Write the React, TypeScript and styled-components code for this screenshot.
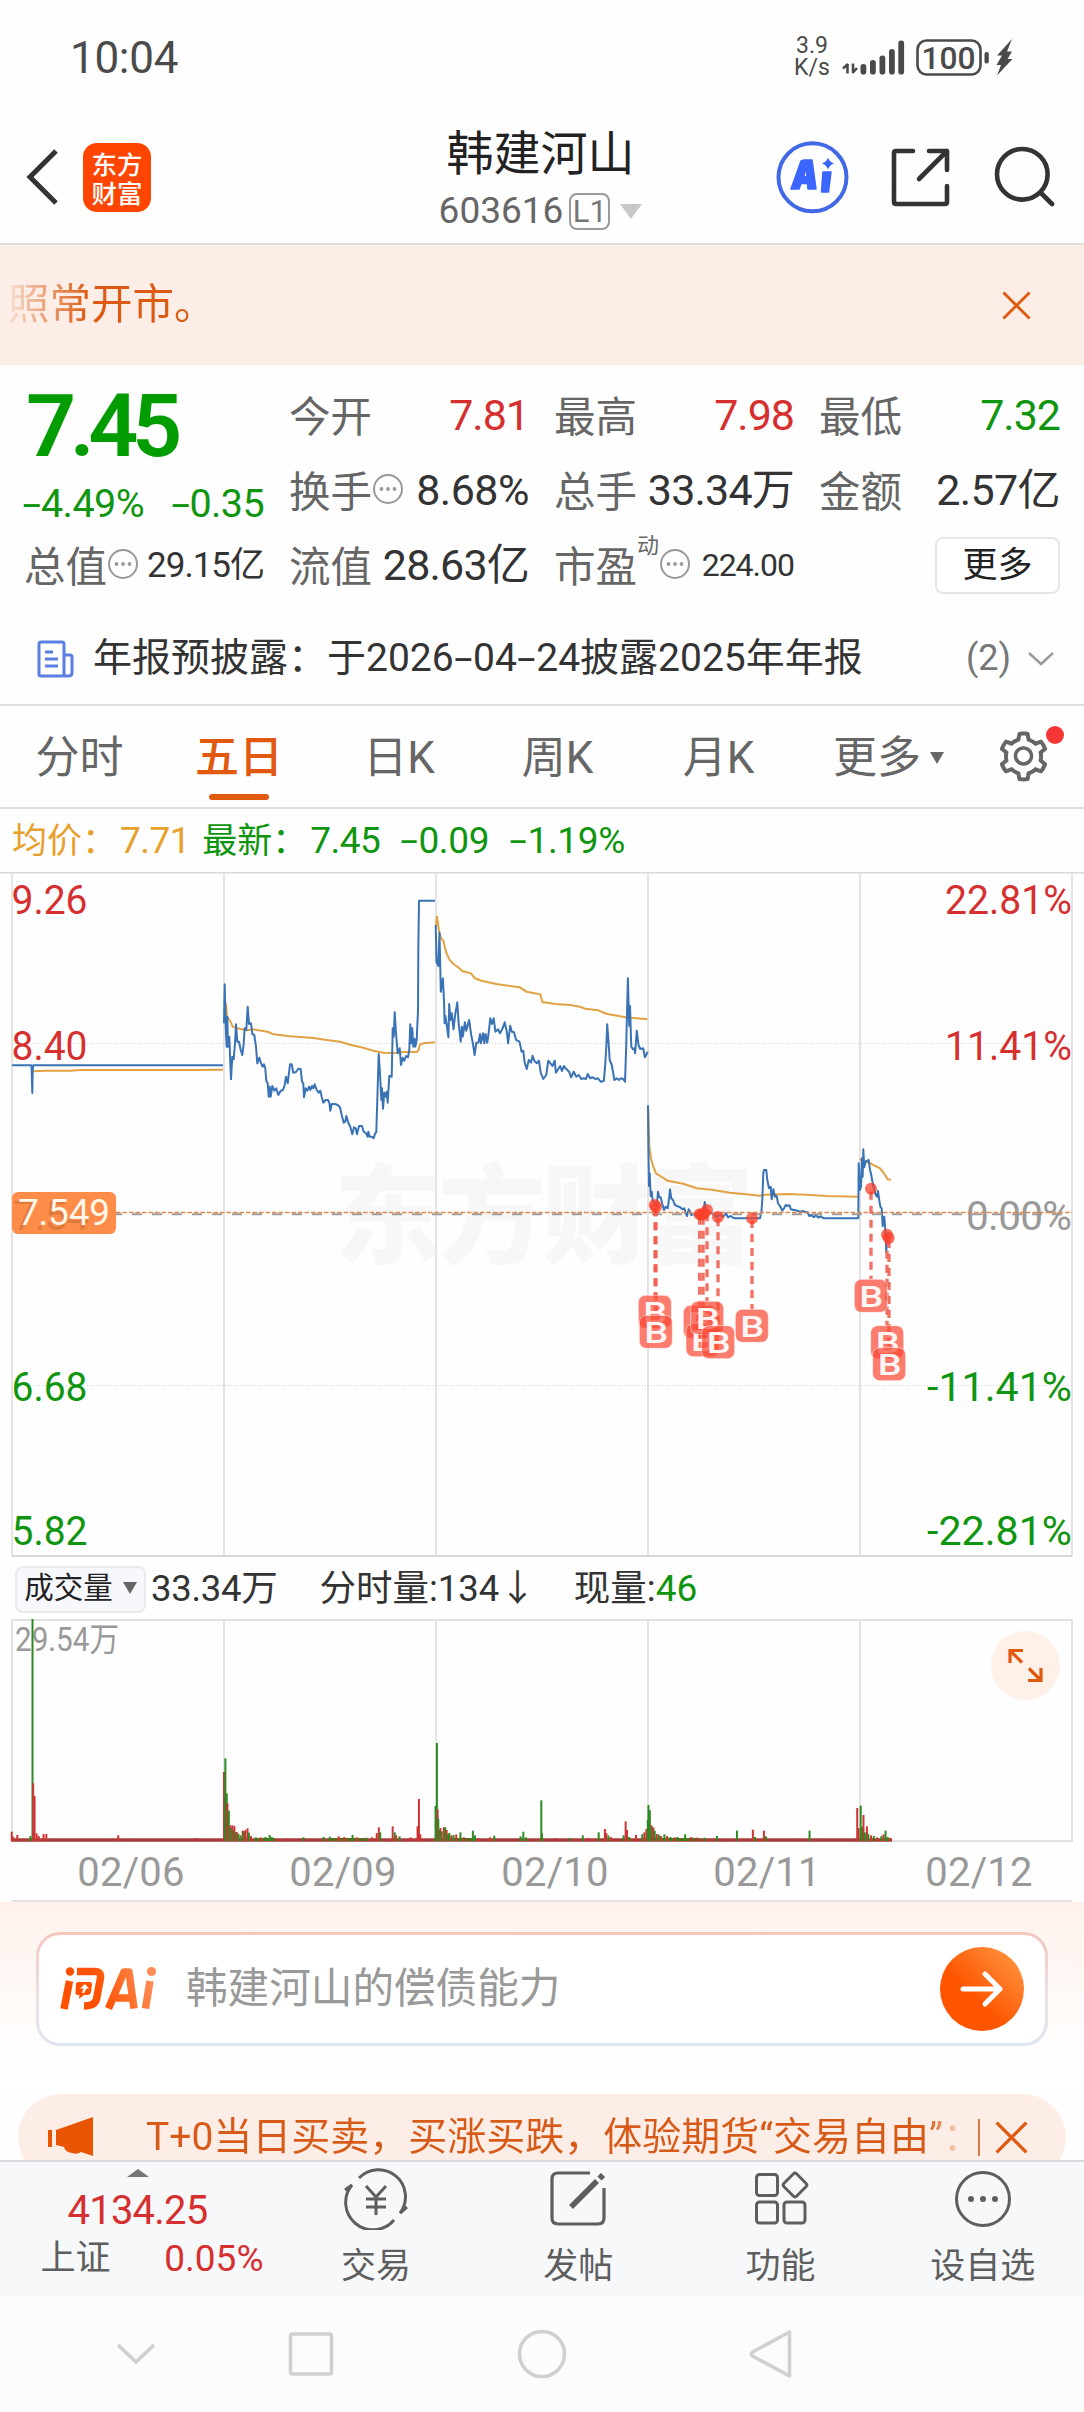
import React from "react";
import styled, { createGlobalStyle } from "styled-components";
import { AiOutlineSetting } from "react-icons/ai";

const RED = "#d5302f";
const GREEN = "#0f950f";
const ORANGE = "#e0590f";
const INK = "#333333";
const GREY = "#666666";
const FONT = `Roboto, "Noto Sans CJK SC", sans-serif`;

const Global = createGlobalStyle`
  html, body { margin: 0; padding: 0; background: #fff; }
  body { font-family: ${FONT}; color: ${INK}; }
  * { box-sizing: border-box; }
  svg { display: block; flex: none; }
`;

const Screen = styled.main`
  width: 1084px;
  height: 2412px;
  overflow: hidden;
  display: flex;
  flex-direction: column;
  background: #fefefe;
`;

const Txt = styled.span<{ $s: number; $c?: string; $w?: number; $ls?: number; $ml?: number }>`
  font-size: ${(p) => p.$s}px;
  line-height: 1.2;
  color: ${(p) => p.$c ?? INK};
  font-weight: ${(p) => p.$w ?? 400};
  letter-spacing: ${(p) => p.$ls ?? 0}px;
  margin-left: ${(p) => p.$ml ?? 0}px;
  white-space: pre;
  flex: none;
`;

/* Hyphen drawn wide, as the numerals' minus sign. */
const Dash = styled.span`
  display: inline-block;
  transform: scaleX(1.7);
  margin: 0 0.11em;
`;
const withDash = (s: string) =>
  s.split("-").map((part, i) => (
    <React.Fragment key={i}>
      {i > 0 && <Dash>-</Dash>}
      {part}
    </React.Fragment>
  ));

/* ---------- status bar ---------- */
const StatusBar = styled.header`
  height: 114px;
  flex: none;
  display: flex;
  justify-content: space-between;
  padding: 32px 70px 0 70px;
`;
const StatusRight = styled.div`
  display: flex;
  height: 50px;
  align-items: center;
`;
const NetSpeed = styled.div`
  display: flex;
  flex-direction: column;
  align-items: center;
  width: 36px;
  margin-right: 12px;
  font-size: 23px;
  line-height: 22px;
  color: #4a4a4a;
`;

/* ---------- title bar ---------- */
const TitleBar = styled.nav`
  height: 131px;
  flex: none;
  display: flex;
  align-items: center;
  border-bottom: 2px solid #dcdcdc;
  padding: 0 29px 3px 26px;
`;
const TitleSide = styled.div<{ $end?: boolean }>`
  flex: 1;
  display: flex;
  align-items: center;
  justify-content: ${(p) => (p.$end ? "flex-end" : "flex-start")};
`;
const AppLogo = styled.div`
  width: 68px;
  height: 69px;
  margin-left: 24px;
  border-radius: 14px;
  background: #ff4500;
  color: #fff;
  display: flex;
  flex-direction: column;
  align-items: center;
  justify-content: center;
  font-family: "Noto Sans CJK SC", sans-serif;
  font-weight: 500;
  font-size: 25.5px;
  line-height: 29px;
`;
const TitleMid = styled.div`
  display: flex;
  flex-direction: column;
  align-items: center;
  width: 210px;
  height: 126px;
  padding-top: 12px;
`;
const CodeRow = styled.div`
  display: flex;
  align-items: center;
  height: 44px;
  margin-top: 7px;
`;
const LevelBox = styled.span`
  width: 41px;
  height: 37px;
  margin: 0 10px 0 6px;
  border: 2px solid #9a9a9a;
  border-radius: 8px;
  font-size: 31px;
  line-height: 34px;
  text-align: center;
  color: #777;
`;

/* ---------- notice banner ---------- */
const Banner = styled.section`
  height: 120px;
  flex: none;
  display: flex;
  align-items: center;
  justify-content: space-between;
  background: #fceee6;
  padding: 0 53px 0 8px;
`;
const FadeText = styled.span`
  font-size: 41.5px;
  line-height: 50px;
  color: transparent;
  background: linear-gradient(90deg, rgba(217, 94, 28, 0.1), #dc5a14 80px);
  background-clip: text;
`;

/* ---------- quote ---------- */
const Quote = styled.section`
  height: 240px;
  flex: none;
  display: grid;
  grid-template-columns: 239px 239px 239px 240px;
  column-gap: 26px;
  grid-template-rows: 75px 75px 75px;
  padding: 13px 0 0 26px;
`;
const PriceCell = styled.div`
  grid-row: span 2;
  display: flex;
  flex-direction: column;
  margin-top: -5px;
`;
const ChangeRow = styled.div`
  display: flex;
  justify-content: space-between;
  padding-right: 1px;
  margin-top: 1px;
  margin-left: -4px;
`;
const Cell = styled.div`
  display: flex;
  align-items: center;
  justify-content: space-between;
  padding-right: 1px;
`;
const CellLabel = styled.div`
  display: flex;
  align-items: center;
  font-size: 41.5px;
  color: ${GREY};
  margin-left: -2px;
  padding-bottom: 3px;
`;
const Sup = styled.sup`
  font-size: 22px;
  line-height: 24px;
  align-self: flex-start;
`;
const MoreButton = styled.button`
  width: 125px;
  height: 57px;
  margin-left: auto;
  border: 2px solid #e6e6e6;
  border-radius: 8px;
  background: #fff;
  font-family: ${FONT};
  font-size: 35px;
  line-height: 48px;
  color: #222;
  padding: 0;
`;

/* ---------- disclosure row ---------- */
const Disclosure = styled.section`
  height: 101px;
  flex: none;
  display: flex;
  align-items: center;
  border-bottom: 2px solid #dedede;
  padding: 8px 30px 0 37px;
`;
const Push = styled.div`
  margin-left: auto;
  display: flex;
  align-items: center;
  gap: 17px;
`;

/* ---------- tabs ---------- */
const Tabs = styled.nav`
  height: 103px;
  flex: none;
  display: flex;
  border-bottom: 2px solid #dedede;
`;
const Tab = styled.div<{ $w: number; $active?: boolean }>`
  width: ${(p) => p.$w}px;
  display: flex;
  flex-direction: column;
  align-items: center;
  padding-top: 22px;
  font-size: 44px;
  line-height: 60px;
  white-space: nowrap;
  font-weight: ${(p) => (p.$active ? 500 : 400)};
  color: ${(p) => (p.$active ? ORANGE : GREY)};
  &::after {
    content: "";
    width: 60px;
    height: 6px;
    margin-top: 6px;
    border-radius: 3px;
    background: ${(p) => (p.$active ? ORANGE : "transparent")};
  }
`;
const TabMore = styled.span`
  display: flex;
  align-items: center;
  gap: 9px;
`;
const GearSlot = styled.div`
  position: relative;
  display: flex;
  align-items: center;
  color: ${GREY};
  padding-left: 19px;
`;
const RedDot = styled.i`
  position: absolute;
  right: -12px;
  top: 20px;
  width: 18px;
  height: 18px;
  border-radius: 50%;
  background: #f53635;
`;

const Legend = styled.div`
  height: 63px;
  flex: none;
  display: flex;
  align-items: center;
  padding: 2px 0 0 12px;
`;

/* ---------- volume header ---------- */
const VolHead = styled.div`
  height: 60px;
  flex: none;
  display: flex;
  align-items: center;
  padding-left: 15px;
`;
const VolPill = styled.div`
  width: 131px;
  height: 47px;
  display: flex;
  align-items: center;
  justify-content: center;
  gap: 10px;
  margin-right: 5px;
  border: 2px solid #e9eaee;
  border-radius: 8px;
  background: #f7f8fb;
  font-size: 29.5px;
  line-height: 38px;
  padding-bottom: 3px;
  color: #222;
`;

/* ---------- dates ---------- */
const Dates = styled.div`
  height: 60px;
  flex: none;
  display: grid;
  grid-template-columns: repeat(5, 212px);
  width: 1060px;
  margin-left: 12px;
  border-bottom: 2px solid #e4e2e2;
  & > span {
    padding-left: 26px;
    text-align: center;
    font-size: 40px;
    line-height: 62px;
    color: #999;
    letter-spacing: 0.2px;
  }
`;

/* ---------- AI box ---------- */
const AiArea = styled.section`
  height: 192px;
  flex: none;
  padding: 30px 36px 0;
  background: linear-gradient(180deg, #fff2ed 0px, #fffefd 155px, #fff 100%);
`;
const AiBox = styled.div`
  height: 114px;
  display: flex;
  align-items: center;
  padding: 0 21px 0 19px;
  border: 3px solid transparent;
  border-radius: 24px;
  background: linear-gradient(#fff, #fff) padding-box,
    linear-gradient(180deg, #f4c6be, #ece0e4 55%, #dde4f0) border-box;
`;
const GoButton = styled.div`
  width: 84px;
  height: 84px;
  margin-left: auto;
  border-radius: 50%;
  display: flex;
  align-items: center;
  justify-content: center;
  background: linear-gradient(225deg, #ff9440 8%, #ff5500 60%);
`;

/* ---------- promo ---------- */
const PromoArea = styled.section`
  height: 66px;
  flex: none;
  overflow: hidden;
  padding: 0 18px;
`;
const Promo = styled.div`
  height: 86px;
  display: flex;
  align-items: center;
  border-radius: 43px;
  background: #fceee6;
  padding-left: 29px;
`;
const PromoText = styled.div`
  width: 819px;
  margin-left: 52px;
  white-space: nowrap;
  font-size: 39px;
  line-height: 44px;
  color: transparent;
  background: linear-gradient(90deg, #d85a18 780px, rgba(217, 94, 28, 0.1) 815px);
  background-clip: text;
`;
const Rule = styled.i`
  width: 2px;
  height: 37px;
  margin: 0 15px 0 13px;
  background: #dd7a44;
`;

/* ---------- bottom ---------- */
const BottomBar = styled.footer`
  height: 136px;
  flex: none;
  display: flex;
  background: #f7f8fa;
  border-top: 2px solid #dadbdf;
`;
const IndexBlock = styled.div`
  width: 275px;
  display: flex;
  flex-direction: column;
  align-items: center;
  gap: 2px;
  padding-top: 7px;
`;
const IndexRow = styled.div`
  width: 223px;
  display: flex;
  align-items: center;
  justify-content: space-between;
  margin-left: 29px;
`;
const Action = styled.div`
  flex: 1;
  display: flex;
  flex-direction: column;
  align-items: center;
  gap: 15px;
  padding-top: 6px;
  font-size: 35px;
  line-height: 44px;
  color: #5e5e5e;
`;
const NavBar = styled.nav`
  height: 116px;
  flex: none;
  display: flex;
  align-items: center;
  background: #fcfcfc;
  padding-left: 116px;
`;

/* ---------- small icons ---------- */
const Triangle = ({ w, h, c, up }: { w: number; h: number; c: string; up?: boolean }) => (
  <svg width={w} height={h} viewBox="0 0 10 10" preserveAspectRatio="none">
    <path d={up ? "M0 10L5 0L10 10Z" : "M0 0H10L5 10Z"} fill={c} />
  </svg>
);
const Dots = () => (
  <svg width="32" height="32" viewBox="0 0 32 32">
    <circle cx="16" cy="16" r="14" fill="none" stroke="#999" strokeWidth="2" />
    {[9.5, 16, 22.5].map((x) => (
      <circle key={x} cx={x} cy="16" r="1.9" fill="#999" />
    ))}
  </svg>
);
const Cross = ({ s }: { s: number }) => (
  <svg width={s} height={s} viewBox="0 0 30 30">
    <path d="M1.5 1.5L28.5 28.5M28.5 1.5L1.5 28.5" stroke={ORANGE} strokeWidth="3" fill="none" />
  </svg>
);

/* ---------- price chart data ---------- */
type Pts = string;
const plot = (pts: Pts, ox: number, sx: number, oy = 870) =>
  pts
    .trim()
    .split(/\s+/)
    .map((p) => {
      const [x, y] = p.split(",").map(Number);
      return `${(ox + x / sx).toFixed(1)},${(oy + y / 3).toFixed(1)}`;
    })
    .join(" ");

const WIDE = 2.3614;
const price: string[] = [
  plot("36,586 94,586 95,600 97,669 98,600 100,586 669,586", 0, 3),
  plot(
    `672,460 674,343 677,470 680,530 682,440 684,530 688,500 693,628 697,560 701,568 705,520 708,463 712,515 717,515 722,540 727,555 731,520 734,475 739,480 743,410 747,462 753,460 757,492 763,495 768,530 772,580 778,563 783,580 788,590 792,583 796,595 799,632 803,640 806,680 809,650 812,680 817,648 823,662 829,655 835,675 842,662 849,660 854,645 858,620 863,640 870,583 875,583 880,608 888,606 895,596 902,597 906,635 910,640 912,682 917,655 922,662 927,650 931,660 936,648 940,655 944,643 950,660 956,668 961,662 965,680 970,698 977,690 984,690 988,698 991,722 995,702 1005,702 1013,705 1020,712 1025,735 1031,758 1036,755 1039,738 1045,758 1051,770 1057,793 1062,772 1067,775 1071,793 1077,768 1086,768 1091,785 1098,790 1103,800 1105,785 1109,800 1116,800 1121,805 1125,792 1129,785 1132,690 1136,552 1140,610 1144,690 1146,655 1149,716 1153,668 1157,680 1160,665 1163,698 1168,618 1175,620 1178,475 1181,500 1184,427 1188,490 1193,550 1199,535 1203,585 1208,563 1213,572 1218,558 1224,562 1228,540 1231,463 1234,520 1237,475 1240,530 1244,507 1246,530 1250,510 1254,420 1255,240 1257,92 1305,92`,
    0,
    3
  ),
  plot(
    `37,165 39,275 43,288 46,188 49,365 54,325 57,400 58,460 60,438 63,465 67,502 69,402 72,450 75,430 79,478 83,435 88,397 91,455 96,515 99,470 101,500 106,457 109,482 116,450 121,495 125,520 129,555 133,518 138,518 142,492 144,520 149,490 152,520 155,492 159,518 163,480 166,445 170,462 174,445 178,485 184,478 189,490 195,475 200,457 205,485 208,520 213,467 217,485 222,487 227,510 235,515 240,545 244,542 247,577 252,597 257,570 262,578 266,557 270,572 276,580 281,572 285,608 291,627 298,615 303,572 308,580 313,588 318,572 321,608 326,598 331,588 335,603 340,588 346,598 352,605 357,622 363,605 369,620 375,615 381,627 387,625 392,627 396,612 402,625 408,622 414,627 420,625 427,635 434,633 437,590 440,530 442,463 445,510 448,570 453,585 459,630 465,625 470,630 475,625 480,627 484,635 487,530 489,420 491,325 494,467 496,408 499,530 503,538 506,535 508,550 512,482 516,525 520,537 527,535 531,562 535,552 538,545`,
    420,
    WIDE
  ),
  plot(
    `144,76 145,180 147,318 149,280 152,348 155,335 158,362 163,365 168,378 172,360 174,335 178,352 182,352 187,372 192,390 197,380 203,385 208,350 210,328 214,355 219,360 225,375 231,378 236,380 241,382 247,388 253,385 257,400 261,408 266,388 270,395 274,405 280,402 286,406 296,404 305,410 311,395 314,366 318,385 325,395 332,398 340,402 347,410 360,405 370,410 378,400 384,412 392,408 402,415 420,415 455,415 480,415 484,400 487,360 490,280 492,270 499,270 502,300 507,325 512,320 515,358 520,328 525,350 530,348 534,370 540,378 547,392 552,385 557,375 563,378 568,375 573,388 582,390 592,392 600,395 610,393 616,397 622,396 628,408 634,405 641,412 648,405 655,413 662,409 671,415 690,415 775,415 776,250 780,330 783,320 786,235 788,290 790,208 793,262 797,244 806,240 810,270 814,285 818,310 823,330 827,345 831,350 834,333 837,355 841,380 845,385 848,438 853,410 856,450 859,515 861,475`,
    600,
    3,
    1080
  ),
];
const average: string[] = [
  plot("100,604 135,602 210,602 240,600 390,600 580,600 669,599", 0, 3),
  plot(
    "678,400 681,440 690,452 698,470 712,475 740,481 760,478 785,482 805,486 820,493 870,499 940,504 975,509 1020,515 1050,524 1090,533 1120,542 1150,548 1185,549 1210,546 1250,546 1256,540 1259,524 1270,520 1290,518 1305,517",
    0,
    3
  ),
  plot(
    "38,165 40,138 45,185 50,205 55,212 62,248 70,270 80,283 90,292 100,303 120,310 130,325 145,332 180,342 235,352 252,365 284,373 289,396 320,402 355,405 380,411 390,416 420,421 440,431 485,442 537,448",
    420,
    WIDE
  ),
  plot(
    "145,90 148,200 153,235 160,260 168,280 185,291 203,302 250,311 290,325 335,329 390,338 430,342 460,345 478,347 497,344 560,342 620,344 680,348 774,350",
    600,
    3,
    1080
  ),
  plot("779,236 792,248 805,246 818,254 840,265 852,280 863,298 873,299", 600, 3, 1080),
];

const stems: [number, number, number][] = [
  [165, 385, 650], [168, 385, 706], [299, 410, 676], [309, 410, 735], [321, 400, 664],
  [354, 415, 737], [456, 420, 688], [813, 335, 598], [861, 470, 738], [867, 480, 803],
];
const dots: [number, number][] = [
  [164, 375], [168, 381], [299, 403], [305, 404], [312, 401], [321, 390], [354, 411],
  [456, 415], [813, 326], [861, 464], [866, 474],
];
const flags: [number, number][] = [
  [115, 646], [118, 706], [250, 676], [258, 731], [272, 664], [305, 737], [406, 688],
  [763, 598], [812, 737], [818, 803],
];

const axis: [string, number, string, number, number, string][] = [
  ["9.26", 914, "22.81%", 945, 127, RED],
  ["8.40", 1060, "11.41%", 945, 127, RED],
  ["6.68", 1401, "-11.41%", 927, 145, GREEN],
  ["5.82", 1545, "-22.81%", 927, 145, GREEN],
];
const COLS = [12, 224, 436, 648, 860, 1072];

const PriceChart = () => (
  <svg width="1084" height="687" viewBox="0 872 1084 687" fontFamily={FONT}>
    <text x="334" y="1255" fontSize="108" fontWeight="900" fill="#f7f7f7" textLength="420">
      东方财富
    </text>
    {COLS.map((x) => (
      <path key={x} d={`M${x} 872V1556`} stroke="#e4e4e4" strokeWidth="2" />
    ))}
    <path d="M0 872.5H1084" stroke="#d8d8d8" strokeWidth="2" />
    <path d="M12 1556H1072" stroke="#d8d8d8" strokeWidth="2" />
    <path d="M12 1043.5H1072M12 1385.5H1072" stroke="#d4d4d4" strokeWidth="1" strokeDasharray="1 2" />
    {average.map((p) => (
      <polyline key={p} points={p} fill="none" stroke="#e2a243" strokeWidth="2" />
    ))}
    {price.map((p) => (
      <polyline key={p} points={p} fill="none" stroke="#3a73b5" strokeWidth="2" strokeLinejoin="round" />
    ))}
    {axis.map(([l, y, r, x, w, c]) => (
      <g key={l} fill={c} fontSize="40.5">
        <text x="11.5" y={y} textLength="76" lengthAdjust="spacingAndGlyphs">{l}</text>
        <text x={x} y={y} textLength={w} lengthAdjust="spacingAndGlyphs">{r}</text>
      </g>
    ))}
    <text x="966" y="1230" fontSize="40.5" fill="#999" textLength="106">0.00%</text>
    <path d="M12 1214.3H1072" stroke="#9c9c9c" strokeWidth="2" strokeDasharray="10 10" />
    <path d="M12 1212.5H1072" stroke="#e08a50" strokeWidth="1.3" strokeDasharray="4.5 2" />
    <rect x="12" y="1192" width="104" height="42" rx="6" fill="#ff8d49" />
    <text x="13" y="1230" fontSize="40.5" fill="#e07a3c" textLength="76">7.54</text>
    <text x="18" y="1225" fontSize="37" fill="#fff8ea" textLength="92">7.549</text>
    {stems.map(([x, a, b], i) => (
      <path key={i} d={`M${600 + x / 3} ${1080 + a / 3}V${1080 + b / 3}`} stroke="#ee5b4c" strokeOpacity="0.85" strokeWidth="3.4" strokeDasharray="8 6" />
    ))}
    {dots.map(([x, y], i) => (
      <circle key={i} cx={600 + x / 3} cy={1080 + y / 3} r="6" fill="#fb3f2a" fillOpacity="0.75" />
    ))}
    {flags.map(([x, y], i) => (
      <g key={i} transform={`translate(${600 + x / 3} ${1080 + y / 3})`}>
        <rect width="33" height="33" rx="7" fill="#fb4a35" fillOpacity="0.72" stroke="#fff" strokeOpacity="0.5" strokeWidth="1" />
        <text x="5" y="27.3" fontSize="30" fontWeight="500" fill="#fff" fillOpacity="0.95" textLength="24" lengthAdjust="spacingAndGlyphs">B</text>
      </g>
    ))}
  </svg>
);

/* ---------- volume chart ---------- */
const spikes: [number, number, 0 | 1][] = [
  [17, 695, 1], [19, 710, 1], [25, 705, 1], [44, 708, 0], [47, 57, 0], [48, 550, 1], [50, 588, 1], [53, 700, 1],
  [56, 708, 1], [63, 702, 1], [67, 702, 1], [171, 706, 1], [283, 714, 1], [324, 516, 1], [326, 475, 0], [328, 580, 0],
  [329, 610, 1], [331, 632, 0], [333, 676, 1], [334, 684, 0], [336, 676, 1], [338, 690, 0], [339, 678, 1], [341, 696, 0], [343, 697, 1],
  [345, 702, 0], [348, 706, 0], [351, 692, 1], [353, 694, 0], [355, 690, 1], [358, 685, 1], [360, 698, 0], [363, 708, 1], [370, 712, 0],
  [377, 712, 1], [384, 711, 0], [390, 705, 0], [393, 711, 0], [416, 715, 1], [439, 712, 0], [468, 711, 0], [477, 710, 0], [490, 709, 1],
  [498, 711, 1], [510, 705, 0], [516, 712, 1], [530, 713, 0], [538, 712, 1], [545, 699, 1], [548, 682, 1], [550, 697, 0],
  [568, 679, 1], [571, 697, 0], [573, 706, 1], [578, 709, 0], [594, 712, 1], [604, 679, 1], [606, 597, 1], [608, 703, 1],
  [630, 618, 0], [632, 429, 0], [633, 628, 1], [634, 657, 0], [636, 690, 0], [637, 684, 1], [639, 694, 0], [642, 682, 1],
  [644, 682, 0], [646, 690, 1], [648, 702, 0], [650, 699, 0], [653, 706, 1], [656, 705, 0], [660, 703, 1], [666, 697, 0],
  [671, 712, 1], [684, 692, 0], [687, 706, 0], [691, 714, 1], [709, 712, 1], [715, 707, 0], [753, 709, 0], [757, 695, 0],
  [761, 712, 0], [783, 601, 0], [784, 700, 0], [803, 714, 1], [824, 714, 0], [843, 706, 0], [850, 714, 1], [866, 697, 0],
  [875, 687, 1], [877, 699, 1], [880, 706, 0], [884, 711, 1], [902, 706, 0], [905, 664, 1], [907, 690, 1], [910, 711, 0],
  [920, 705, 1], [929, 703, 0], [932, 697, 1], [935, 687, 1], [937, 660, 0], [938, 615, 0], [940, 631, 0], [942, 676, 1],
  [943, 680, 0], [945, 682, 1], [947, 692, 0], [950, 702, 1], [953, 704, 0], [956, 708, 1], [961, 703, 0], [965, 708, 1],
  [970, 711, 0], [976, 712, 1], [980, 711, 0], [991, 703, 0], [1000, 711, 1], [1008, 713, 1], [1019, 713, 0], [1037, 708, 0],
  [1066, 692, 0], [1089, 689, 1], [1092, 711, 0], [1105, 692, 1], [1108, 709, 0], [1171, 692, 0], [1240, 624, 1],
  [1242, 684, 1], [1245, 617, 0], [1247, 680, 0], [1249, 645, 1], [1251, 697, 0], [1254, 679, 1], [1256, 702, 0],
  [1260, 706, 1], [1264, 708, 0], [1269, 712, 1], [1275, 708, 0], [1278, 703, 1], [1281, 692, 0], [1284, 711, 0], [1287, 714, 1],
];
const U = 1.4465;

const VolumeChart = () => (
  <svg width="1084" height="223" viewBox="0 1619 1084 223" fontFamily={FONT}>
    <path d="M12 1620H1072V1841H12Z" fill="none" stroke="#e2e2e2" strokeWidth="2" />
    {COLS.slice(1, 5).map((x) => (
      <path key={x} d={`M${x} 1619V1841`} stroke="#e4e4e4" strokeWidth="2" />
    ))}
    <text x="15" y="1651" fontSize="33" fill="#999" textLength="104" lengthAdjust="spacingAndGlyphs">29.54万</text>
    <path d="M11 1840H892" stroke="#a83c38" strokeWidth="3.4" />
    {[[255, 275], [330, 365], [440, 475], [650, 700]].map(([a, b]) => (
      <path key={a} d={`M${a} 1839.5H${b}`} stroke="#5e6a1c" strokeWidth="3" />
    ))}
    {spikes.map(([x, y, up], i) => (
      <path key={i} d={`M${x / U} ${1600 + y / 3}V1841`} stroke={up ? "#cc3433" : "#2b8a22"} strokeWidth="2" />
    ))}
    <circle cx="1025.5" cy="1665.5" r="34.5" fill="#fff0e8" />
    <path d="M1010 1663V1650.5H1023M1011 1651.5L1022 1662.5M1041 1668V1680.5H1028M1040 1679.5L1029 1668.5" fill="none" stroke={ORANGE} strokeWidth="3.2" />
  </svg>
);

export default function App() {
  return (
    <>
      <Global />
      <Screen>
        <StatusBar>
          <Txt $s={44} $c="#4a4a4a" $ls={-0.3}>10:04</Txt>
          <StatusRight>
            <NetSpeed>
              <span>3.9</span>
              <span>K/s</span>
            </NetSpeed>
            <svg width="172" height="40" viewBox="842 35 172 40" fill="#4a4a4a">
              <path d="M847.5 62V71.5M848 62L843 66.5M853 61.5V71M852.5 71L857 66" stroke="#4a4a4a" strokeWidth="2.6" fill="none" />
              {[[860.5, 62], [870, 58], [879.5, 53.5], [889, 47], [898.3, 38.5]].map(([x, y]) => (
                <rect key={x} x={x} y={y} width="5.8" height={72.5 - y} rx="2.8" />
              ))}
              <rect x="917.5" y="38.5" width="63" height="34" rx="9" fill="none" stroke="#4a4a4a" strokeWidth="2.6" />
              <text x="921.5" y="66.5" fontSize="31" fontFamily={FONT} fontWeight="500" textLength="54" lengthAdjust="spacingAndGlyphs">100</text>
              <rect x="984.5" y="50" width="4.3" height="11.5" rx="2" />
              <path d="M1012 37L997 53.5H1002L996.5 63H1001L997 73.5L1012.5 57H1007.5L1012 49.5H1007Z" />
            </svg>
          </StatusRight>
        </StatusBar>

        <TitleBar>
          <TitleSide>
            <svg width="33" height="58" viewBox="0 0 33 58">
              <path d="M30 3L4 29L30 55" fill="none" stroke={INK} strokeWidth="5" />
            </svg>
            <AppLogo>
              <span>东方</span>
              <span>财富</span>
            </AppLogo>
          </TitleSide>
          <TitleMid>
            <Txt $s={47} $c="#222">韩建河山</Txt>
            <CodeRow>
              <Txt $s={37} $c={GREY}>603616</Txt>
              <LevelBox>L1</LevelBox>
              <Triangle w={22} h={15} c="#c8c8c8" />
            </CodeRow>
          </TitleMid>
          <TitleSide $end>
            <svg width="279" height="76" viewBox="776 139 279 76" fill="none" stroke={INK} strokeWidth="4.6">
              <circle cx="812.5" cy="177.3" r="34" stroke="#4169e6" strokeWidth="4" />
              <path d="M804 160H812L816 189H808L807.5 183.5H801L799 189H791L801 161ZM803.5 176.5H807L806.5 168Z" fill="#3a66ff" fillRule="evenodd" stroke="#3a66ff" strokeWidth="1.5" strokeLinejoin="round" />
              <path d="M823 172H831L828.5 192H821.5Z" fill="#3a66ff" stroke="#3a66ff" strokeWidth="1.5" strokeLinejoin="round" />
              <path d="M828 157.5Q829.5 162 834 163.5Q829.5 165 828 169.5Q826.5 165 822 163.5Q826.5 162 828 157.5Z" fill="#3a66ff" stroke="none" />
              <path d="M913 151H896Q894 151 894 153V202Q894 204 896 204H945Q947 204 947 202V186M929 151H947V170M947 151L919 179" strokeLinecap="round" strokeLinejoin="round" />
              <circle cx="1022.3" cy="174.3" r="25.3" />
              <path d="M1041 193L1052 204" strokeLinecap="round" />
            </svg>
          </TitleSide>
        </TitleBar>

        <Banner>
          <FadeText>照常开市。</FadeText>
          <Cross s={29} />
        </Banner>

        <Quote>
          <PriceCell>
            <Txt $s={88} $c="#039d03" $w={600} $ls={-6.5}>7.45</Txt>
            <ChangeRow>
              <Txt $s={39.5} $c={GREEN} $ls={-0.6}>{withDash("-4.49%")}</Txt>
              <Txt $s={39.5} $c={GREEN} $ls={-0.6}>{withDash("-0.35")}</Txt>
            </ChangeRow>
          </PriceCell>
          <Cell><CellLabel>今开</CellLabel><Txt $s={43} $c={RED} $ls={-1}>7.81</Txt></Cell>
          <Cell><CellLabel>最高</CellLabel><Txt $s={43} $c={RED} $ls={-1}>7.98</Txt></Cell>
          <Cell><CellLabel>最低</CellLabel><Txt $s={43} $c={GREEN} $ls={-1}>7.32</Txt></Cell>
          <Cell><CellLabel>换手<Dots /></CellLabel><Txt $s={43} $ls={-0.5}>8.68%</Txt></Cell>
          <Cell><CellLabel>总手</CellLabel><Txt $s={43} $ls={-0.8}>33.34万</Txt></Cell>
          <Cell><CellLabel>金额</CellLabel><Txt $s={43} $ls={-0.6}>2.57亿</Txt></Cell>
          <Cell><CellLabel>总值<Dots /></CellLabel><Txt $s={35} $ls={-1}>29.15亿</Txt></Cell>
          <Cell><CellLabel>流值</CellLabel><Txt $s={43} $ls={-0.8}>28.63亿</Txt></Cell>
          <Cell><CellLabel>市盈<Sup>动</Sup><Dots /></CellLabel><Txt $s={32} $ls={-1}>224.00</Txt></Cell>
          <Cell><MoreButton>更多</MoreButton></Cell>
        </Quote>

        <Disclosure>
          <svg width="37" height="38" viewBox="0 0 37 38" fill="none" stroke="#5b7fe0" strokeWidth="3">
            <path d="M2 4Q2 2 4 2H25Q27 2 27 4V36H4Q2 36 2 34ZM27 15H33Q35 15 35 17V33Q35 36 31 36H25" />
            <path d="M8 12H16M8 19H21M8 26H21" />
          </svg>
          <Txt $s={39} $ml={19}>{withDash("年报预披露：于2026-04-24披露2025年年报")}</Txt>
          <Push>
            <Txt $s={36} $c="#777">(2)</Txt>
            <svg width="26" height="14" viewBox="0 0 26 14">
              <path d="M1 1L13 12L25 1" fill="none" stroke="#999" strokeWidth="2.4" />
            </svg>
          </Push>
        </Disclosure>

        <Tabs>
          <Tab $w={159}>分时</Tab>
          <Tab $w={160} $active>五日</Tab>
          <Tab $w={160}>日K</Tab>
          <Tab $w={157}>周K</Tab>
          <Tab $w={165}>月K</Tab>
          <Tab $w={175}>
            <TabMore>更多<Triangle w={14} h={12} c={GREY} /></TabMore>
          </Tab>
          <GearSlot>
            <AiOutlineSetting size={57} />
            <RedDot />
          </GearSlot>
        </Tabs>

        <Legend>
          <Txt $s={35} $c="#e8a02c">均价：</Txt>
          <Txt $s={37} $c="#e8a02c" $ls={-0.5} $ml={3}>7.71</Txt>
          <Txt $s={35} $c={GREEN} $ml={12}>最新：</Txt>
          <Txt $s={37} $c={GREEN} $ls={-0.5} $ml={3}>7.45</Txt>
          <Txt $s={37} $c={GREEN} $ls={-0.3} $ml={20}>{withDash("-0.09")}</Txt>
          <Txt $s={37} $c={GREEN} $ls={-0.3} $ml={20}>{withDash("-1.19%")}</Txt>
        </Legend>

        <PriceChart />

        <VolHead>
          <VolPill>成交量<Triangle w={14} h={12} c={GREY} /></VolPill>
          <Txt $s={36.5} $ls={-0.3}>33.34万</Txt>
          <Txt $s={36.5} $ml={42}>分时量:134↓</Txt>
          <Txt $s={36.5} $ml={38}>现量:</Txt>
          <Txt $s={37} $c={GREEN}>46</Txt>
        </VolHead>

        <VolumeChart />

        <Dates>
          {["02/06", "02/09", "02/10", "02/11", "02/12"].map((d) => (
            <span key={d}>{d}</span>
          ))}
        </Dates>

        <AiArea>
          <AiBox>
            <svg width="100" height="46" viewBox="58 1966 100 46" fill="none">
              <defs>
                <linearGradient id="ask" gradientUnits="userSpaceOnUse" x1="60" y1="2010" x2="158" y2="1968">
                  <stop offset="0.4" stopColor="#ff5100" />
                  <stop offset="1" stopColor="#ff9a6a" />
                </linearGradient>
              </defs>
              <g stroke="url(#ask)" strokeWidth="7.5" strokeLinejoin="round">
                <path d="M69.5 1981L64 2009M77 1971.5H95Q101.500 1971.500 100.500 1978L96.500 1999Q95 2006 84 2006" />
                <path d="M108.500 2008.500L124 1972H129L134 2008.500M116 1998H133" />
                <path d="M150 1981L145.500 2008.500" />
              </g>
              <path d="M78 1982H89Q92.500 1982 92 1985L91 1992Q90.500 1995 87 1995H84L79 1999L79.500 1995H78Q75 1995 75.500 1992L76 1984Q76.500 1982 78 1982Z" fill="#ff5100" />
              <path d="M80 1988.500L85 1984L89 1988.500H86.500L84 1993H82L83.500 1988.500Z" fill="#fff" />
              <circle cx="70" cy="1971.5" r="4.2" fill="#ff5100" />
              <circle cx="151.5" cy="1971.5" r="4.600" fill="#ff8a5a" />
            </svg>
            <Txt $s={41.6} $c="#999" $ml={28}>韩建河山的偿债能力</Txt>
            <GoButton>
              <svg width="44" height="38" viewBox="0 0 44 38">
                <path d="M3 19H40M25 4L40 19L25 34" fill="none" stroke="#fff" strokeWidth="5" strokeLinecap="round" strokeLinejoin="round" />
              </svg>
            </GoButton>
          </AiBox>
        </AiArea>

        <PromoArea>
          <Promo>
            <svg width="47" height="40" viewBox="0 0 47 40" fill="#ea5504">
              <path d="M1 13H5V30H1ZM9 13L46 0V39L34 35Q30 38 25 36Q18 35 17 30L9 28Z" />
            </svg>
            <PromoText>{"T+0当日买卖，买涨买跌，体验期货“交易自由”："}</PromoText>
            <Rule />
            <Cross s={33} />
          </Promo>
        </PromoArea>

        <BottomBar>
          <IndexBlock>
            <Triangle w={22} h={8} c="#777" up />
            <Txt $s={40} $c={RED} $ls={-0.8} style={{ paddingTop: 8 }}>4134.25</Txt>
            <IndexRow>
              <Txt $s={35} $c="#5e5e5e">上证</Txt>
              <Txt $s={37} $c={RED}>0.05%</Txt>
            </IndexRow>
          </IndexBlock>
          <Action>
            <svg width="66" height="62" viewBox="0 0 66 62" fill="none" stroke="#5e5e5e" strokeWidth="3">
              <path d="M16 10A27 27 0 0 1 57 45L64 39M51 52A27 27 0 0 1 9 17L2 22" />
              <path d="M23 18L33 29L43 18M33 29V47M23 31H43M23 39H43" />
            </svg>
            交易
          </Action>
          <Action>
            <svg width="66" height="62" viewBox="0 0 66 62" fill="none" stroke="#5e5e5e" strokeWidth="3.2">
              <path d="M45 5H13Q7 5 7 11V50Q7 56 13 56H53Q59 56 59 50V20" />
              <path d="M26 39L52 13" strokeWidth="5.5" />
              <path d="M54.5 10.5L58 7" strokeWidth="6" />
            </svg>
            发帖
          </Action>
          <Action>
            <svg width="66" height="62" viewBox="0 0 66 62" fill="none" stroke="#5e5e5e" strokeWidth="3">
              <rect x="8.5" y="6.5" width="21" height="21" rx="3" />
              <rect x="8.5" y="34" width="21" height="21" rx="3" />
              <rect x="36" y="34" width="21" height="21" rx="3" />
              <rect x="38" y="8" width="18" height="18" rx="2.5" transform="rotate(45 47 17)" />
            </svg>
            功能
          </Action>
          <Action>
            <svg width="66" height="62" viewBox="0 0 66 62">
              <circle cx="33" cy="31" r="26.5" fill="none" stroke="#5e5e5e" strokeWidth="3" />
              {[21, 33, 45].map((x) => (
                <circle key={x} cx={x} cy="31" r="3" fill="#5e5e5e" />
              ))}
            </svg>
            设自选
          </Action>
        </BottomBar>

        <NavBar>
          <svg width="680" height="50" viewBox="116 2329 680 50" fill="none" stroke="#d0d0d0" strokeWidth="3.6" strokeLinejoin="round">
            <path d="M118 2345L136 2362L154 2345" />
            <rect x="290.5" y="2334" width="41" height="40" rx="2" />
            <circle cx="542" cy="2354" r="22.5" />
            <path d="M789.5 2332V2376L752.5 2356Q750.5 2354 752.5 2352Z" />
          </svg>
        </NavBar>
      </Screen>
    </>
  );
}
